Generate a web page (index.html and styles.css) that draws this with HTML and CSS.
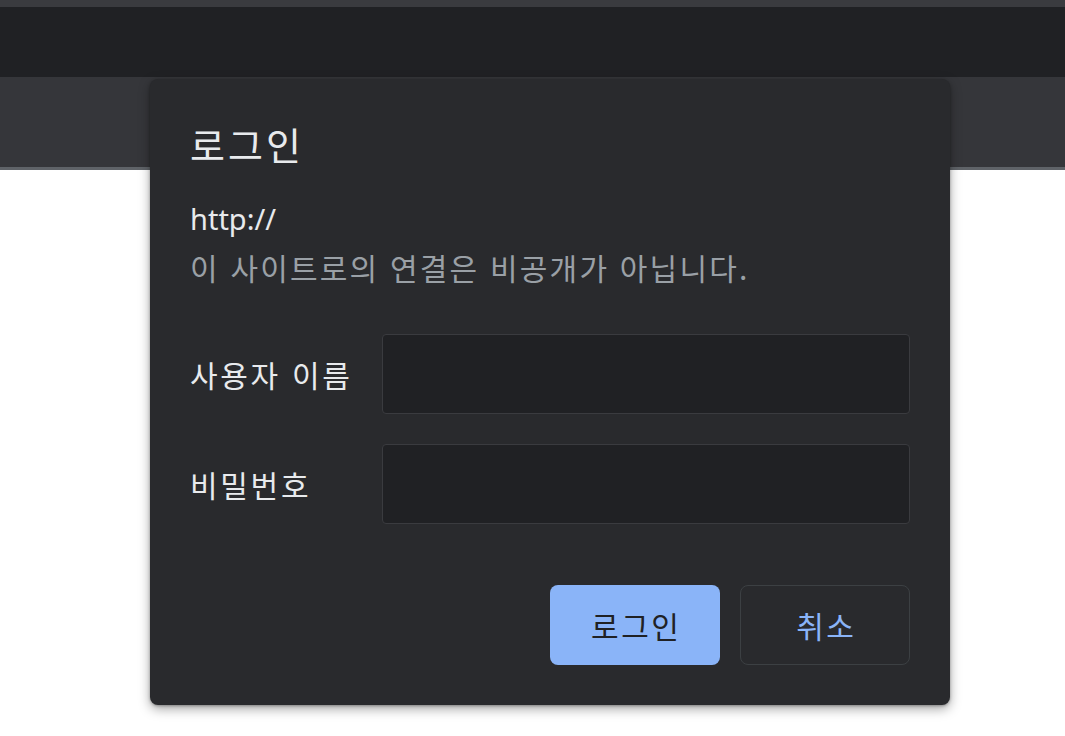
FILE: index.html
```html
<!DOCTYPE html>
<html lang="ko">
<head>
<meta charset="utf-8">
<title>로그인</title>
<link rel="stylesheet" href="styles.css">
</head>
<body>
<div class="chrome">
  <div class="strip"></div>
  <div class="tabbar"></div>
  <div class="toolbar"></div>
</div>
<div class="page"></div>
<div class="dialog" role="dialog">
  <h1 class="title">로그인</h1>
  <div class="origin">http://</div>
  <div class="note">이 사이트로의 연결은 비공개가 아닙니다.</div>
  <form class="form">
    <label class="label" for="u">사용자 이름</label>
    <input class="field" id="u" type="text">
    <label class="label" for="p">비밀번호</label>
    <input class="field" id="p" type="password">
  </form>
  <div class="actions">
    <button class="btn primary" type="button">로그인</button>
    <button class="btn secondary" type="button">취소</button>
  </div>
</div>
</body>
</html>
```
FILE: styles.css
```css
html, body {
  margin: 0;
  padding: 0;
  background: #ffffff;
  font-family: "Noto Sans CJK KR", "Noto Sans", sans-serif;
}
.chrome {
  display: flex;
  flex-direction: column;
}
.strip {
  height: 7px;
  background: #3a3b3f;
}
.tabbar {
  height: 70px;
  background: #202124;
}
.toolbar {
  height: 90px;
  background: #35363a;
  border-bottom: 3px solid #5f6368;
}
.dialog {
  position: absolute;
  left: 150px;
  top: 79px;
  width: 800px;
  height: 626px;
  box-sizing: border-box;
  padding: 40px;
  background: #292a2d;
  border-radius: 8px;
  box-shadow: 0 4px 12px rgba(0, 0, 0, 0.35), 0 1px 3px rgba(0, 0, 0, 0.3);
  display: flex;
  flex-direction: column;
  color: #e8eaed;
}
.title {
  margin: 5px 0 0 0;
  font-size: 38px;
  font-weight: 400;
  letter-spacing: 3px;
  line-height: 40px;
  color: #e8eaed;
}
.origin {
  margin-top: 35px;
  font-family: "Noto Sans", "Noto Sans CJK KR", sans-serif;
  font-size: 29px;
  line-height: 40px;
  color: #e8eaed;
}
.note {
  margin-top: 4px;
  font-size: 30px;
  letter-spacing: 2.2px;
  line-height: 48px;
  color: #9aa0a6;
}
.form {
  margin-top: 43px;
  display: grid;
  grid-template-columns: 192px 1fr;
  grid-auto-rows: 80px;
  row-gap: 30px;
  align-items: center;
}
.label {
  font-size: 30px;
  letter-spacing: 2.7px;
  line-height: 40px;
  color: #e8eaed;
}
.field {
  height: 80px;
  box-sizing: border-box;
  background: #202124;
  border: 1px solid #3a3b3f;
  border-radius: 4px;
  outline: none;
}
.actions {
  margin-top: 61px;
  display: flex;
  justify-content: flex-end;
  gap: 20px;
}
.btn {
  width: 170px;
  height: 80px;
  border-radius: 8px;
  font-family: "Noto Sans CJK KR", "Noto Sans", sans-serif;
  font-size: 30px;
  letter-spacing: 2.5px;
  padding: 0 0 0 2.5px;
  cursor: pointer;
}
.primary {
  background: #8ab4f8;
  color: #202124;
  border: none;
}
.secondary {
  background: transparent;
  color: #8ab4f8;
  border: 1px solid #3c4043;
}
```
